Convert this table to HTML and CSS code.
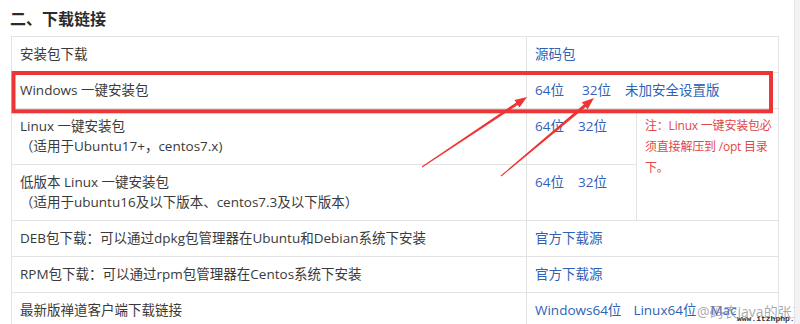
FILE: index.html
```html
<!DOCTYPE html>
<html lang="zh-CN">
<head>
<meta charset="utf-8">
<title>下载链接</title>
<link rel="stylesheet" href="styles.css">
</head>
<body>
<div class="page">
  <h2 class="title">二、下载链接</h2>
  <table class="dl">
    <colgroup><col class="c1"><col class="c2"><col class="c3"></colgroup>
    <tr>
      <td>安装包下载</td>
      <td colspan="2"><a class="lk">源码包</a></td>
    </tr>
    <tr>
      <td>Windows 一键安装包</td>
      <td colspan="2"><a class="lk lk-wide">64位</a><a class="lk">32位</a><a class="lk">未加安全设置版</a></td>
    </tr>
    <tr>
      <td>Linux 一键安装包<br>（适用于Ubuntu17+，centos7.x)</td>
      <td><a class="lk">64位</a><a class="lk">32位</a></td>
      <td rowspan="2" class="note">注：Linux 一键安装包必<br>须直接解压到 /opt 目录<br>下。</td>
    </tr>
    <tr>
      <td>低版本 Linux 一键安装包<br>（适用于ubuntu16及以下版本、centos7.3及以下版本）</td>
      <td><a class="lk">64位</a><a class="lk">32位</a></td>
    </tr>
    <tr>
      <td>DEB包下载：可以通过dpkg包管理器在Ubuntu和Debian系统下安装</td>
      <td colspan="2"><a class="lk">官方下载源</a></td>
    </tr>
    <tr>
      <td>RPM包下载：可以通过rpm包管理器在Centos系统下安装</td>
      <td colspan="2"><a class="lk">官方下载源</a></td>
    </tr>
    <tr>
      <td>最新版禅道客户端下载链接</td>
      <td colspan="2"><a class="lk lk-tight">Windows64位</a><a class="lk">Linux64位</a><a class="lk">Mac</a></td>
    </tr>
  </table>
  <svg class="annot" width="800" height="324" viewBox="0 0 800 324" aria-hidden="true">
    <rect x="13.5" y="73" width="757.5" height="38.3" fill="none" stroke="#ee3535" stroke-width="4"/>
    <polygon fill="#ee3535" points="421.7,166.6 516.2,102.5 514.5,100 527,97 519.5,107.4 517.8,104.9 422.3,167.4"/>
    <polygon fill="#ee3535" points="500.7,175.6 583.8,104.5 581.9,102.3 594,98 587.7,109.2 585.8,106.9 501.3,176.4"/>
  </svg>
  <div class="wm">@码农java的张三</div>
  <div class="wm-url">www.itzhphp.online</div>
</div>
</body>
</html>
```
FILE: styles.css
```css
html, body {
  margin: 0;
  padding: 0;
  background: #f2f2f2;
}
.page {
  position: relative;
  width: 795px;
  height: 324px;
  overflow: hidden;
  background: #fff;
  border-right: 1px solid #e4e4e4;
  padding: 6px 0 0 10px;
  box-sizing: border-box;
  font-family: "Open Sans", "Noto Sans CJK SC", sans-serif;
  color: #3a3a3a;
}
.title {
  margin: 0 0 6px 0;
  font-size: 16px;
  line-height: 24px;
  font-weight: 700;
  color: #2b2b2b;
  font-family: "Noto Sans CJK SC", sans-serif;
}
.dl {
  margin-left: 1px;
  border-collapse: collapse;
  table-layout: fixed;
  width: 767px;
  font-size: 13.5px;
  line-height: 20px;
}
.c1 { width: 515px; }
.c2 { width: 110px; }
.c3 { width: 142px; }
.dl td {
  border: 1px solid #e3e3e3;
  padding: 7px 8px 8px 8px;
  vertical-align: top;
}
.lk {
  color: #2f62b6;
  text-decoration: none;
  margin-right: 14px;
}
.lk-wide { margin-right: 18px; }
.lk-tight { margin-right: 12px; }
.dl td.note {
  color: #e04848;
  font-size: 12px;
  line-height: 21px;
  padding: 6px 2px 8px 8px;
  white-space: nowrap;
  letter-spacing: -0.2px;
}
.annot {
  position: absolute;
  left: 0;
  top: 0;
}
.wm {
  position: absolute;
  left: 697px;
  top: 302px;
  font-size: 14px;
  line-height: 20px;
  color: rgba(140, 140, 150, 0.75);
  white-space: nowrap;
}
.wm-url {
  position: absolute;
  left: 737px;
  top: 314px;
  font-family: "Liberation Mono", monospace;
  font-size: 8px;
  line-height: 10px;
  font-weight: 700;
  color: #333;
  white-space: nowrap;
}
```
